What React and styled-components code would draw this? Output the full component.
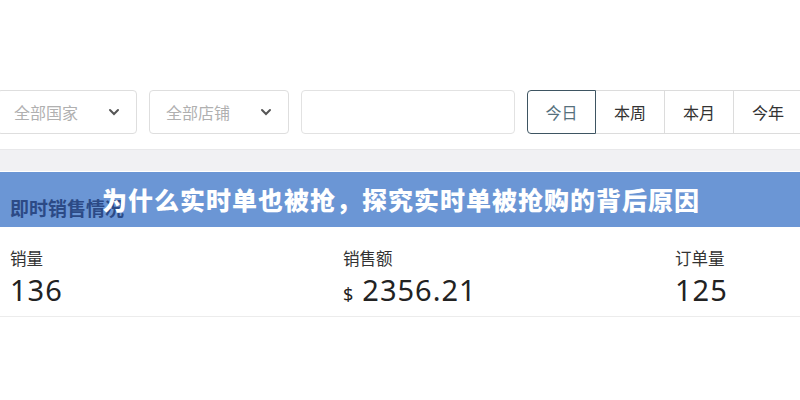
import styled, { createGlobalStyle } from "styled-components";

const Global = createGlobalStyle`
  body {
    margin: 0;
    background: #fff;
    font-family: "Noto Sans", "Noto Sans CJK SC", sans-serif;
  }
`;

const Page = styled.div`
  width: 800px;
  height: 400px;
  overflow: hidden;
  padding-top: 90px;
  box-sizing: border-box;
  position: relative;
`;

const Toolbar = styled.div`
  display: flex;
  align-items: center;
  gap: 12px;
  margin-left: -3px;
  height: 44px;
`;

const Select = styled.div`
  width: 140px;
  height: 44px;
  box-sizing: border-box;
  border: 1px solid #dedede;
  border-radius: 4px;
  display: flex;
  align-items: center;
  justify-content: space-between;
  padding: 0 16px 0 16px;
  font-size: 16px;
  color: #b0b0b0;
  flex-shrink: 0;
`;

const Chevron = () => (
  <svg width="12" height="8" viewBox="0 0 12 8">
    <path d="M2 2 L6 6 L10 2" fill="none" stroke="#555" strokeWidth="2" strokeLinecap="round" />
  </svg>
);

const Input = styled.div`
  width: 214px;
  height: 44px;
  box-sizing: border-box;
  border: 1px solid #e2e2e2;
  border-radius: 4px;
  flex-shrink: 0;
`;

const Segments = styled.div`
  display: flex;
  flex-shrink: 0;
`;

const Segment = styled.div`
  width: 69px;
  height: 44px;
  box-sizing: border-box;
  display: grid;
  place-items: center;
  font-size: 16px;
  color: ${(p) => (p.$active ? "#56707c" : "#333")};
  border: 1px solid ${(p) => (p.$active ? "#3e5562" : "#dcdcdc")};
  border-left-width: ${(p) => (p.$active ? "1px" : "0")};
  border-radius: ${(p) => (p.$active ? "4px 0 0 4px" : "0")};
`;

const Band = styled.div`
  height: 21px;
  margin-top: 15px;
  background: #f1f1f3;
  border-top: 1px solid #e8e8ea;
`;

const Card = styled.div`
  padding: 0 10px;
  margin-top: 2px;
`;

// sits above the banner's background, below the banner's own text
const CardTitle = styled.div`
  position: relative;
  z-index: 1;
  height: 55px;
  display: flex;
  align-items: center;
  padding-top: 14px;
  box-sizing: border-box;
  font-size: 19px;
  font-weight: 700;
  color: #2c4a86;
`;

const Stats = styled.div`
  display: grid;
  grid-template-columns: 333px 332px 1fr;
  padding-top: 20px;
  padding-bottom: 4px;
  border-bottom: 1px solid #ececec;
  margin: 0 -10px;
  padding-left: 10px;
`;

const Stat = styled.div`
  display: flex;
  flex-direction: column;
  gap: 2px;
`;

const Label = styled.div`
  font-size: 16.5px;
  color: #333;
  line-height: 22px;
`;

const Value = styled.div`
  font-size: 29px;
  color: #222;
  line-height: 36px;
  letter-spacing: 1px;
`;

const Currency = styled.span`
  font-size: 18px;
  margin-right: 8px;
`;

const Banner = styled.div`
  position: absolute;
  left: 0;
  right: 0;
  top: 172px;
  height: 55px;
  background: #6b96d5;
  display: flex;
  align-items: center;
  padding-left: 102px;
  padding-bottom: 2px;
  box-sizing: border-box;
`;

const BannerText = styled.span`
  position: relative;
  z-index: 2;
  font-family: "Noto Sans CJK SC", sans-serif;
  font-size: 25px;
  font-weight: 900;
  letter-spacing: 1px;
  color: #fff;
`;

export default function App() {
  return (
    <Page>
      <Global />
      <Toolbar>
        <Select>
          全部国家
          <Chevron />
        </Select>
        <Select>
          全部店铺
          <Chevron />
        </Select>
        <Input />
        <Segments>
          <Segment $active>今日</Segment>
          <Segment>本周</Segment>
          <Segment>本月</Segment>
          <Segment>今年</Segment>
        </Segments>
      </Toolbar>
      <Band />
      <Banner>
        <BannerText>为什么实时单也被抢，探究实时单被抢购的背后原因</BannerText>
      </Banner>
      <Card>
        <CardTitle>即时销售情况</CardTitle>
        <Stats>
          <Stat>
            <Label>销量</Label>
            <Value>136</Value>
          </Stat>
          <Stat>
            <Label>销售额</Label>
            <Value>
              <Currency>$</Currency>2356.21
            </Value>
          </Stat>
          <Stat>
            <Label>订单量</Label>
            <Value>125</Value>
          </Stat>
        </Stats>
      </Card>
    </Page>
  );
}
